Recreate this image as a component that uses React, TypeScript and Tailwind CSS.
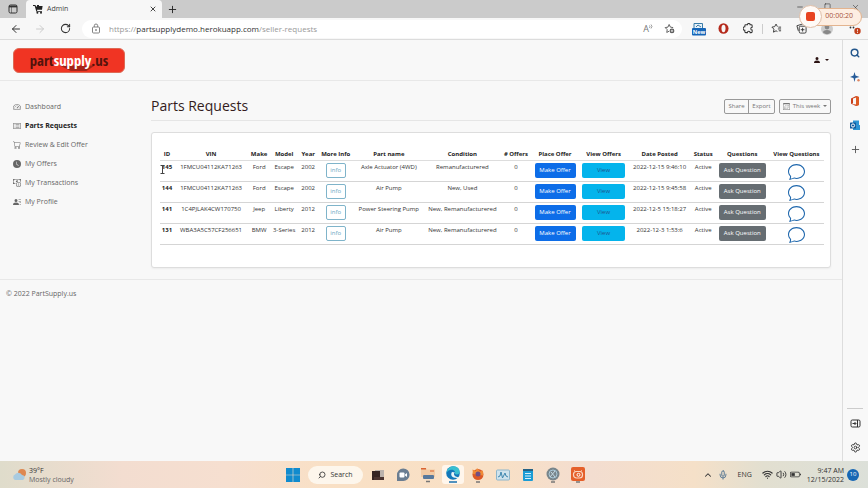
import React from 'react';
import {
  ArrowLeft, ArrowRight, RotateCw, Plus, X, Search, Settings,
  ChevronUp, Mic, Wifi, Volume2, Minus, Square,
} from 'lucide-react';
import {
  BsSpeedometer2, BsCart, BsClockFill, BsPersonFill, BsCalendar3, BsChat,
  BsCardList, BsCashCoin, BsPersonLinesFill, BsBatteryHalf,
} from 'react-icons/bs';

const nav = [
  { label: 'Dashboard', Icon: BsSpeedometer2 },
  { label: 'Parts Requests', Icon: BsCardList, active: true },
  { label: 'Review & Edit Offer', Icon: BsCart },
  { label: 'My Offers', Icon: BsClockFill },
  { label: 'My Transactions', Icon: BsCashCoin },
  { label: 'My Profile', Icon: BsPersonLinesFill },
];

const columns = [
  { title: 'ID', width: 'w-[14px]' },
  { title: 'VIN', width: 'w-[74px]' },
  { title: 'Make', width: 'w-[22px]' },
  { title: 'Model', width: 'w-[28px]' },
  { title: 'Year', width: 'w-[20px]' },
  { title: 'More Info', width: 'w-[35px]' },
  { title: 'Part name', width: 'w-[71px]' },
  { title: 'Condition', width: 'w-[76px]' },
  { title: '# Offers', width: 'w-[31px]' },
  { title: 'Place Offer', width: 'w-[47px]' },
  { title: 'View Offers', width: 'w-[50px]' },
  { title: 'Date Posted', width: 'w-[62px]' },
  { title: 'Status', width: 'w-[25px]' },
  { title: 'Questions', width: 'w-[53px]' },
  { title: 'View Questions', width: 'w-[55px]' },
];

const requests = [
  { id: 145, vin: '1FMCU04112KA71263', make: 'Ford', model: 'Escape', year: 2002, part: 'Axle Actuator (4WD)', condition: 'Remanufacturered', date: '2022-12-15 9:46:10' },
  { id: 144, vin: '1FMCU04112KA71263', make: 'Ford', model: 'Escape', year: 2002, part: 'Air Pump', condition: 'New, Used', date: '2022-12-15 9:45:58' },
  { id: 141, vin: '1C4PJLAK4CW170750', make: 'Jeep', model: 'Liberty', year: 2012, part: 'Power Steering Pump', condition: 'New, Remanufacturered', date: '2022-12-5 15:18:27' },
  { id: 131, vin: 'WBA3A5C57CF256651', make: 'BMW', model: '3-Series', year: 2012, part: 'Air Pump', condition: 'New, Remanufacturered', date: '2022-12-3 1:53:6' },
];

function TabStrip() {
  return (
    <div className="flex h-[18px] items-stretch bg-[#cbcbcb]">
      <button aria-label="Tab actions" className="flex w-[26px] items-center justify-center">
        <svg viewBox="0 0 10 10" className="size-[10px]" fill="none" stroke="#333">
          <rect x="1" y="1" width="8" height="8" rx="1.5" />
          <path d="M1 2.500h8" strokeWidth="1.800" /><path d="M3.500 3v6" strokeWidth=".5" />
        </svg>
      </button>
      <div className="flex w-[136px] items-center rounded-t bg-[#f7f7f7] pr-[5px] pl-[7px]">
        <svg viewBox="0 0 10 10" className="size-[10px]" fill="#222">
          <path d="M0 1h2.400l.7 1.600H4V1h2v1h3.600L9 5.800H4L4.300 7H9v.8H3.400L1.700 2H0z" />
          <circle cx="4.400" cy="8.800" r="1" /><circle cx="8" cy="8.800" r="1" />
        </svg>
        <span className="ml-1 flex-1 text-[7px] leading-[10px] text-[#444]">Admin</span>
        <button aria-label="Close tab"><X size={8} strokeWidth={2.5} color="#222" /></button>
      </div>
      <button aria-label="New tab" className="flex w-5 items-center justify-center"><Plus size={11} strokeWidth={2} color="#222" /></button>
      <div className="ml-auto flex items-start gap-5 pt-[3px] pr-2 text-[#333]">
        <Minus size={8} /><Square size={7} /><X size={9} strokeWidth={1.5} />
      </div>
    </div>
  );
}

function Toolbar() {
  return (
    <div className="flex h-[22px] items-center border-b border-[#dcdcdc] bg-[#f7f7f7] text-[#333]">
      <button aria-label="Back" className="ml-2.5"><ArrowLeft size={12} strokeWidth={2} /></button>
      <button aria-label="Forward" className="ml-3 text-[#ccc]"><ArrowRight size={12} strokeWidth={2} /></button>
      <button aria-label="Refresh" className="ml-[14px]"><RotateCw size={11} strokeWidth={2.200} /></button>
      <div className="ml-[11px] flex h-[18px] flex-1 items-center rounded-full bg-white pr-[7px] pl-[9px]">
        <svg viewBox="0 0 10 11" className="h-[11px] w-[10px]" fill="none" stroke="#777" strokeWidth=".9">
          <rect x="1.500" y="4" width="7" height="6" rx="1" /><path d="M3.300 4V2.700a1.700 1.700 0 0 1 3.400 0V4" /><circle cx="5" cy="7" r=".5" fill="#777" />
        </svg>
        <span className="ml-2 text-[8px] leading-3 text-[#999]">
          https://<span className="text-[#333]">partsupplydemo.herokuapp.com</span>/seller-requests
        </span>
        <span className="ml-auto flex items-start text-[9px] leading-[10px] text-[#777]">
          A
          <svg viewBox="0 0 4 5" className="h-[5px] w-1" fill="none" stroke="#777" strokeWidth=".7"><path d="M.5 1.500q1 1 0 2.500M2 .5q2 2 0 4" /></svg>
        </span>
        <svg viewBox="0 0 12 12" className="ml-[11px] size-[11px]" fill="none" stroke="#555">
          <path d="M5.500 9L3 10.300l.5-3L1.300 5l3-.5L5.600 1.600 7 4.500l3 .5" />
          <circle cx="8.700" cy="8.600" r="2.600" fill="#555" stroke="none" />
          <path d="M7.300 8.600h2.800M8.700 7.200V10" stroke="#fff" strokeWidth=".8" />
        </svg>
      </div>
      <div className="ml-1 flex items-center pr-1 *:flex *:w-[25px] *:justify-center">
        <button aria-label="Mail">
          <svg viewBox="0 0 14 14" className="size-[14px]">
            <path d="M2 7V1.500h8.500V7" fill="#e8f1f8" stroke="#3a7ca8" />
            <path d="M4 5l2-2 3 2" fill="none" stroke="#3a7ca8" />
            <rect y="6" width="14" height="7.500" rx="1" fill="#1565b8" />
            <text x="7" y="12" textAnchor="middle" fontSize="5.500" fontWeight="700" fill="#fff" fontFamily="Open Sans">New</text>
          </svg>
        </button>
        <button aria-label="Ad blocker">
          <svg viewBox="0 0 12 12" className="size-[11px]"><ellipse cx="6" cy="6" rx="5.500" ry="5.800" fill="#b52a1c" /><ellipse cx="6" cy="6" rx="2.200" ry="4" fill="#f7f7f7" /></svg>
        </button>
        <button aria-label="Extensions">
          <svg viewBox="0 0 12 12" className="size-[11px]" fill="none" stroke="#333" strokeWidth="1.100"><path d="M2 4.200V3a1 1 0 0 1 1-1h1.800a1.500 1.500 0 0 1 3 0H9a1 1 0 0 1 1 1v1.700a1.500 1.500 0 0 0 0 3V9.500a1 1 0 0 1-1 1H7.800a1.500 1.500 0 0 0-3 0H3a1 1 0 0 1-1-1V8a1.900 1.900 0 0 1 0-3.800z" /></svg>
        </button>
        <div className="-mx-[11px]"><span className="h-2.5 w-px bg-[#ccc]" /></div>
        <button aria-label="Favorites">
          <svg viewBox="0 0 12 12" className="size-[11px]" fill="none" stroke="#333"><path d="M7 4L5.500 1.200 4 4 1 4.500l2.200 2.200L2.700 10l2.800-1.500L7 9.300M8 4.500h3M7.500 6.500H11M8.500 8.500H11" /></svg>
        </button>
        <button aria-label="Collections">
          <svg viewBox="0 0 12 12" className="size-[11px]" fill="none" stroke="#333"><rect x="3.500" y="3.500" width="7.500" height="7.500" rx="1.500" /><path d="M2.500 8.500L1 3l6.500-2M7.200 5.300v4M5.200 7.300h4" /></svg>
        </button>
        <button aria-label="Profile">
          <svg viewBox="0 0 12 12" className="size-3"><circle cx="6" cy="6" r="6" fill="#ccc" /><circle cx="6" cy="4" r="2.400" fill="#888" /><path d="M2 9.500Q2 7 6 7t4 2.500Q6 13 2 9.500" fill="#888" /></svg>
        </button>
        <button aria-label="More">
          <svg viewBox="0 0 12 12" className="ml-1.5 size-3"><circle cx="1.500" cy="4.500" r=".9" fill="#333" /><circle cx="4.500" cy="4.500" r=".9" fill="#333" /><circle cx="8.500" cy="8" r="3.200" fill="#c2401c" /><path d="M8.500 6.200v2.200M8.500 9v1" stroke="#fff" strokeWidth=".8" /></svg>
        </button>
      </div>
    </div>
  );
}

function Recorder() {
  return (
    <div className="absolute top-[5px] right-[6px] flex items-center">
      <div className="z-10 flex size-[23px] items-center justify-center rounded-full border border-[#dfbfa8] bg-[#fffaf6]">
        <span className="size-[9px] rounded-[2px] bg-[#e8431f]" />
      </div>
      <div className="-ml-2 flex h-[18px] w-[48px] items-center justify-end rounded-r-full border border-[#e3b48f] bg-[#fdeee2] pr-2 text-[7px] whitespace-nowrap text-[#a5523c]">
        00:00:20
      </div>
    </div>
  );
}

function EdgeSidebar() {
  return (
    <aside className="flex w-[26px] flex-col items-center border-l border-[#ddd] bg-[#f8f8f8] pt-2 pr-px pb-2">
      <div className="flex flex-col items-center gap-[14px]">
        <Search size={10} strokeWidth={3.500} color="#24578c" />
        <svg viewBox="0 0 10 10" className="size-[10px]"><path d="M4.500 0l1 3.500L9.500 5l-4 1-1 4-1-4L0 5l3.500-1.500z" fill="#245a98" /><circle cx="8.500" cy="8.300" r="1.200" fill="#dd8662" /></svg>
        <svg viewBox="0 0 10 10" className="size-[10px]"><path d="M1 2.500L6 0l3 1v8l-3 1-4.500-2L6 8.500v-7L3 2.500v5L1 8z" fill="#c9401c" /><path d="M6 0l3 1v8l-3 1z" fill="#dd5a22" /></svg>
        <svg viewBox="0 0 10 10" className="size-[10px]"><path d="M3 .5h6V5h1v5H3z" fill="#2d94d4" /><rect y="2.500" width="6" height="6" rx=".6" fill="#135b9e" /><circle cx="3" cy="5.500" r="1.600" fill="none" stroke="#fff" /></svg>
        <Plus size={11} strokeWidth={2} color="#555" />
      </div>
      <div className="mt-auto flex flex-col items-center gap-[13px]">
        <span className="-mb-1 h-px w-4 bg-[#ccc]" />
        <svg viewBox="0 0 11 11" className="size-[11px]" fill="none" stroke="#333"><rect x="1" y="2" width="9" height="7" rx="1.300" /><path d="M7.500 2v7M2.500 5.500h3.300M4.500 4l1.500 1.500L4.500 7" /></svg>
        <Settings size={11} color="#333" />
      </div>
    </aside>
  );
}

function Caret() {
  return <span className="border-x-2 border-t-2 border-x-transparent border-t-current" />;
}

function RequestsTable() {
  return (
    <table className="w-full table-fixed border-collapse text-center text-[6px] leading-[9px] whitespace-nowrap text-[#333]">
      <thead>
        <tr className="border-b border-[#ddd] text-[#222]">
          {columns.map((c) => (
            <th key={c.title} scope="col" className={c.width + ' h-[11px] p-0 align-middle font-bold'}>
              <span className="flex justify-center">{c.title}</span>
            </th>
          ))}
        </tr>
      </thead>
      <tbody>
        {requests.map((r) => (
          <tr key={r.id} className="h-[21px] border-b border-[#d5d5d5] align-top *:px-0 *:pt-[2px]">
            <th scope="row" className="font-bold text-[#222]">{r.id}</th>
            <td><span className="flex justify-center">{r.vin}</span></td>
            <td>{r.make}</td>
            <td>{r.model}</td>
            <td>{r.year}</td>
            <td><button className="h-[15px] w-5 rounded-[2px] border border-[#7fb4ca] text-[#6ba8c2]">info</button></td>
            <td>{r.part}</td>
            <td>{r.condition}</td>
            <td>0</td>
            <td><button className="h-[15px] w-[41px] rounded-[2px] bg-[#0d6de8] font-medium text-white">Make Offer</button></td>
            <td><button className="h-[15px] w-[43px] rounded-[2px] bg-[#04b4ec] text-[#1f568c]">View</button></td>
            <td>{r.date}</td>
            <td>Active</td>
            <td><button className="h-[15px] w-[47px] rounded-[2px] bg-[#666d72] font-medium text-white">Ask Question</button></td>
            <td><button aria-label={'View questions for ' + r.id} className="inline-block align-top text-[#1d66ac]"><BsChat size={17} /></button></td>
          </tr>
        ))}
      </tbody>
    </table>
  );
}

function Page() {
  return (
    <div className="flex min-w-0 flex-1 flex-col bg-[#f8f8f8]">
      <header className="flex h-[41px] items-center justify-between border-b border-[#e8e8e8] pr-[13px] pl-[13px]">
        <a href="#home" className="flex h-[25px] w-[112px] overflow-hidden rounded-[6px] border border-[#dd6a55] bg-[#f03423]">
          <svg viewBox="0 0 112 25" className="size-full" role="img" aria-label="partsupply.us">
            <path d="M46 18h38l-9 6H58z" fill="#a32318" />
            <text x="56" y="18" textAnchor="middle" fontSize="16" fontWeight="700" fill="#54130c" fontFamily="Open Sans Condensed, Noto Sans Condensed, Open Sans">
              part<tspan fill="#fff">supply</tspan>.us
            </text>
          </svg>
        </a>
        <button aria-label="Account" className="flex items-center gap-1 text-[#2b1212]"><BsPersonFill size={8} /><Caret /></button>
      </header>
      <div className="flex">
        <nav className="flex w-[151px] shrink-0 flex-col gap-[9px] pt-[21px] pl-[13px]">
          {nav.map(({ label, Icon, active }) => (
            <a key={label} href="#nav" className={'flex items-center gap-1 text-[7px] leading-[10px] ' + (active ? 'font-bold text-[#222]' : 'font-medium text-[#666]')}>
              <Icon size={8} className="text-[#666]" />{label}
            </a>
          ))}
        </nav>
        <main className="min-w-0 flex-1 pr-[11px]">
          <div className="mb-[11px] flex h-10 items-center justify-between border-b border-[#e5e5e5] pt-[11px]">
            <h1 className="text-[14px] leading-5 text-[#331c1c]">Parts Requests</h1>
            <div className="flex gap-1 text-[6px] leading-[10px] text-[#777]">
              <div className="flex rounded-[2px] border border-[#999]">
                <button className="w-6 border-r border-[#999]">Share</button>
                <button className="h-[13px] w-[25px]">Export</button>
              </div>
              <button className="flex h-[15px] w-[52px] items-center justify-center gap-[3px] rounded-[2px] border border-[#999]">
                <BsCalendar3 size={7} />This week<Caret />
              </button>
            </div>
          </div>
          <section className="rounded-[3px] border border-[#ddd] bg-white pt-4 pr-[6px] pb-[22px] pl-2 shadow-xs">
            <RequestsTable />
          </section>
        </main>
      </div>
      <footer className="mt-[11px] border-t border-[#e8e8e8] px-1.5 pt-[9px] text-[7px] leading-[10px] text-[#666]">© 2022 PartSupply.us</footer>
    </div>
  );
}

function Taskbar() {
  return (
    <div className="flex h-[27px] items-center justify-between bg-[linear-gradient(90deg,#dfdccb_0%,#f3ddd0_14%,#f6dfd0_26%,#f9e0c5_38%,#f8e0c6_58%,#f3ddd0_68%,#f5e0c8_80%,#e2dfd0_88%,#dce0d9_100%)] text-[7px] leading-[9px] text-[#333]">
      <div className="flex flex-1 items-center gap-[3px] pl-3">
        <svg viewBox="0 0 14 14" className="size-[14px]"><circle cx="10" cy="5" r="4" fill="#de8850" /><path d="M3 12a3 3 0 0 1 0-5.500A4 4 0 0 1 10 7a2.600 2.600 0 0 1 1 5z" fill="#a9cbe0" /></svg>
        <div>39°F<br /><span className="text-[#666]">Mostly cloudy</span></div>
      </div>
      <div className="flex items-center gap-[11px]">
        <svg viewBox="0 0 14 14" className="size-[14px]" fill="#118bce"><path d="M0 0h6.700v6.700H0zM7.300 0H14v6.700H7.300zM0 7.300h6.700V14H0zM7.300 7.300H14V14H7.300z" /></svg>
        <button className="-mx-[3px] flex h-[18px] w-[55px] items-center justify-center gap-1 rounded-full bg-[#fdf6ec]"><Search size={8} strokeWidth={2.500} className="-scale-x-100" />Search</button>
        <svg viewBox="0 0 14 14" className="size-[14px]"><path d="M4 2h9v9H4z" fill="#bbb2ac" /><path d="M1 3h8v9H1z" fill="#352423" /><path d="M3 9h10v3H3z" fill="#4a3330" /></svg>
        <svg viewBox="0 0 14 14" className="size-[14px]"><path d="M1 13V7a6.300 6.300 0 1 1 6 6z" fill="#6a7d91" /><rect x="3.500" y="4.500" width="5" height="5" rx="1" fill="#fff" /><path d="M9 6.500l2-1.500v4L9 7.500z" fill="#fff" /></svg>
        <svg viewBox="0 0 14 16" className="h-4 w-[14px]"><path d="M0 1h5l1 1.500h8V10H0z" fill="#f2cba5" /><path d="M0 1h5v1.500H0zM9 3.500h4v1H9z" fill="#da6433" /><rect x="2" y="8" width="11" height="4" rx="1" fill="#58799c" /><path d="M5 14.500h4" stroke="#777" strokeWidth="1.500" /></svg>
        <span className="-mx-1 rounded-[3px] bg-[#fff6ec] px-1 py-px">
          <svg viewBox="0 0 14 17" className="h-[17px] w-[14px]"><circle cx="7" cy="7" r="6.800" fill="#1378ba" /><path d="M.5 7C1 2 5 0 8 .3c4 .4 6 3.300 5.700 6.200-.3 2-3 2.500-4.700 1.500C10 5 7 3 4 4 2 4.500 1 6 .5 7z" fill="#39bfd0" /><path d="M6 6c-2 3 0 6 5 6 1 0 2-1 2-1-2 0-5-.5-5-3 0-1 1-1.500 1-1.500z" fill="#e9f4f8" /><path d="M3 16h8" stroke="#176fae" strokeWidth="1.500" /></svg>
        </span>
        <svg viewBox="0 0 14 16" className="h-4 w-[14px]"><circle cx="7" cy="7.500" r="5.500" fill="#dc5825" /><path d="M2 7L1.500 2.500 5 4l1-3 3 3.500 3-1v5z" fill="#f08a36" /><circle cx="7" cy="7" r="2.500" fill="#704e83" /><path d="M5 15h4" stroke="#777" strokeWidth="1.500" /></svg>
        <svg viewBox="0 0 14 14" className="size-[14px]"><rect x=".5" y="2" width="13" height="10" rx="1" fill="#cfe3ed" stroke="#8db6cc" /><path d="M2 9l2-1 1-4 1.500 6L9 5l1 3 2 1" fill="none" stroke="#3f87af" /></svg>
        <svg viewBox="0 0 14 14" className="size-[14px]"><rect x="2" y="1" width="10" height="12" rx="1" fill="#1b9cd5" /><path d="M2 1h10v2H2z" fill="#246285" /><path d="M4 5.500h6M4 8h6M4 10.500h6" stroke="#d7f0fb" /></svg>
        <svg viewBox="0 0 14 16" className="h-4 w-[14px]"><circle cx="7" cy="7" r="6.500" fill="#78858b" /><circle cx="7" cy="7" r="4" fill="none" stroke="#a9c9da" /><path d="M4 10l5-6M9 10L5 5" stroke="#c6dae3" /><path d="M5 15h4" stroke="#777" strokeWidth="1.500" /></svg>
        <svg viewBox="0 0 14 16" className="h-4 w-[14px]"><rect width="14" height="14" rx="2" fill="#e5602b" /><path d="M3 3.500l1.500 1M11 3.500l-1.500 1" stroke="#fbd7c3" /><rect x="2.500" y="4.500" width="9" height="6.500" rx="3" fill="none" stroke="#fbd7c3" strokeWidth="1.200" /><circle cx="7.500" cy="7.800" r="1.500" fill="none" stroke="#fff" /><path d="M5 15h4" stroke="#777" strokeWidth="1.500" /></svg>
      </div>
      <div className="flex flex-1 items-center justify-end pr-[9px]">
        <ChevronUp size={10} strokeWidth={2.500} />
        <Mic size={10} className="ml-[5px]" color="#446a8c" />
        <span className="ml-2.5">ENG</span>
        <Wifi size={11} strokeWidth={2.500} className="ml-2.5" /><Volume2 size={11} className="ml-[3px]" /><BsBatteryHalf size={11} className="ml-[3px]" />
        <div className="ml-[6px] text-right">9:47 AM<br />12/15/2022</div>
        <span className="ml-[3px] flex size-3 items-center justify-center rounded-full bg-[#1767b4] text-[6px] text-white">10</span>
      </div>
    </div>
  );
}

export default function App() {
  return (
    <div className="relative flex min-h-screen flex-col bg-[#f8f8f8] font-['Open_Sans','Noto_Sans',sans-serif]">
      <TabStrip />
      <Toolbar />
      <div className="flex flex-1">
        <Page />
        <EdgeSidebar />
      </div>
      <Taskbar />
      <Recorder />
      <svg viewBox="0 0 5 9" className="pointer-events-none absolute top-[165px] left-[160px] h-[9px] w-[5px]" fill="none" stroke="#444"><path d="M.5 .5h4M2.500 .5v8M.5 8.500h4" /></svg>
    </div>
  );
}
